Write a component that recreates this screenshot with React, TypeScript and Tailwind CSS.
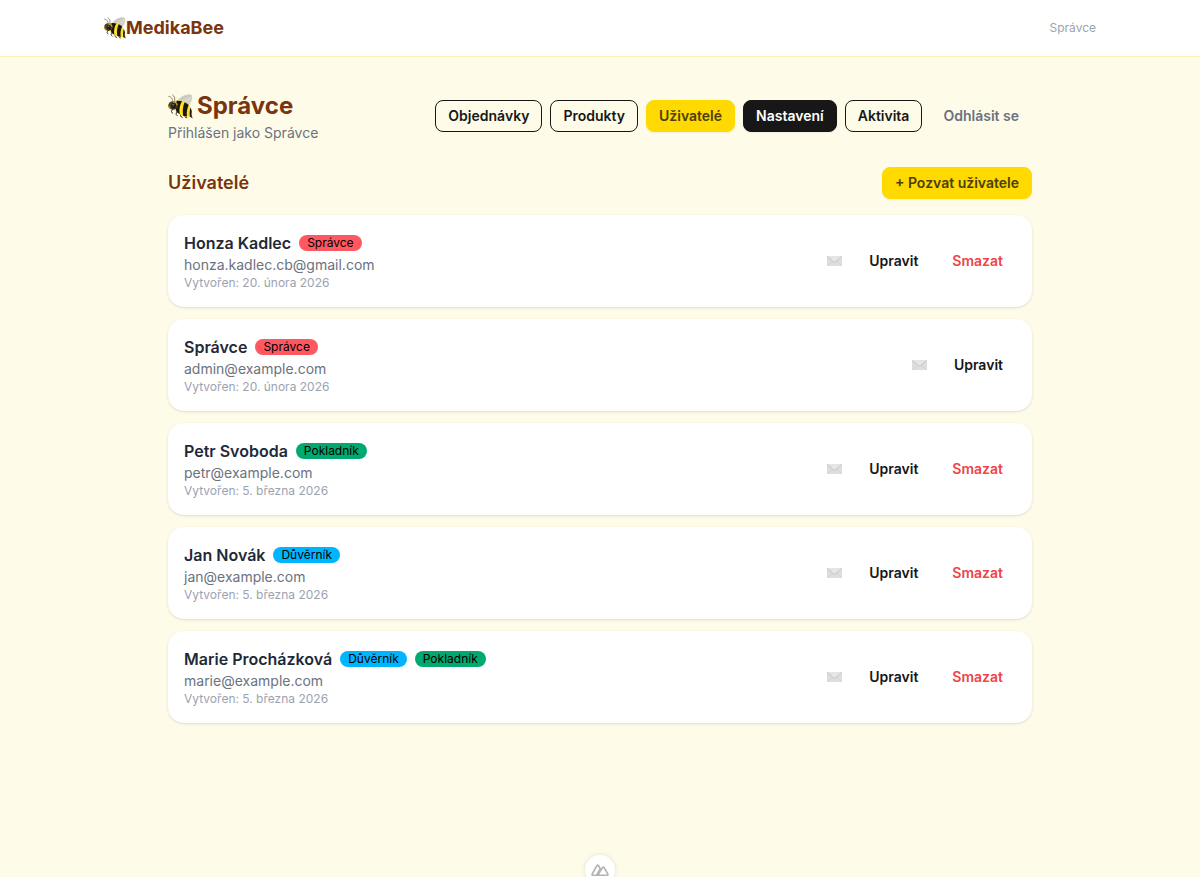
import React from 'react';

type Role = 'admin' | 'cashier' | 'steward';

interface User {
  name: string;
  email: string;
  created: string;
  roles: Role[];
  removable: boolean;
}

const roleLabels: Record<Role, string> = {
  admin: 'Správce',
  cashier: 'Pokladník',
  steward: 'Důvěrník',
};

const roleColors: Record<Role, string> = {
  admin: 'bg-[#ff5861]',
  cashier: 'bg-[#00a96e]',
  steward: 'bg-[#00b5ff]',
};

const users: User[] = [
  { name: 'Honza Kadlec', email: 'honza.kadlec.cb@gmail.com', created: '20. února 2026', roles: ['admin'], removable: true },
  { name: 'Správce', email: 'admin@example.com', created: '20. února 2026', roles: ['admin'], removable: false },
  { name: 'Petr Svoboda', email: 'petr@example.com', created: '5. března 2026', roles: ['cashier'], removable: true },
  { name: 'Jan Novák', email: 'jan@example.com', created: '5. března 2026', roles: ['steward'], removable: true },
  { name: 'Marie Procházková', email: 'marie@example.com', created: '5. března 2026', roles: ['steward', 'cashier'], removable: true },
];

const btn = 'inline-flex h-8 items-center justify-center rounded-lg border px-3 text-sm font-semibold whitespace-nowrap';
const btnOutline = `${btn} border-[#171717] text-[#171717]`;
const btnPrimary = `${btn} border-[#ffd900] bg-[#ffd900] text-[#4b400c] shadow-xs`;
const btnNeutral = `${btn} border-[#171717] bg-[#171717] text-white shadow-xs`;
const btnGhost = `${btn} border-transparent`;

const navItems = [
  { label: 'Objednávky', style: btnOutline },
  { label: 'Produkty', style: btnOutline },
  { label: 'Uživatelé', style: btnPrimary },
  { label: 'Nastavení', style: btnNeutral },
  { label: 'Aktivita', style: btnOutline },
];

const Bee: React.FC<{ className: string }> = ({ className }) => (
  <svg className={className} viewBox="0 0 25 25" fill="none" aria-hidden="true">
    {/* wings */}
    <path d="M9 7.500C11 3.200 17 .1 21.500.3c3.200.3 3.300 3.400 2 6.500-.9 2.200-1.900 4.200-3.500 5.200C16 10.600 12.500 9.200 9 7.500z" fill="#d3d0c5" />
    <path d="M11.500 7.500C14 4.200 18 1.700 22.300 1.600" stroke="#bcb9ac" strokeWidth=".7" />
    <path d="M14 8.500c3.500-1.100 6.500-3 8.800-5" stroke="#e6e3d8" strokeWidth=".8" />
    {/* antennae */}
    <path d="M4.500 8.500C4.900 5.300 3.900 2.900.8 2.400M6.500 8C7.400 5.200 6.700 2.200 4.600.8" stroke="#6b644f" strokeWidth=".8" strokeLinecap="round" />
    {/* legs */}
    <path d="M5 15 3.400 17.200l1 2M8.500 18l-.4 2.400 1.300 1.400M12.500 20.300l.3 2.200 1.500.7M16.500 21.500l1 2 1.300.3" stroke="#3a3222" strokeWidth="1" strokeLinecap="round" strokeLinejoin="round" />
    {/* body */}
    <path d="M6.500 7.200c5.200-1.700 11.300.1 14.600 4.100 2.500 3 3.100 7 3.200 11.100-3.600.7-7.600.3-10.800-1.200C9.800 19.600 7 17.200 5.500 14z" fill="#ffde2e" />
    <path d="M8.600 6.800c2-.2 3.900 0 5.500.5-2.300 3.500-3.200 7.800-2.400 13-1.300-.8-2.400-1.700-3.400-2.800-.9-4-.7-7.700.3-10.700zM16.600 8.200c1.600.7 3 1.600 4.100 2.700-1.700 3.400-2.300 7.200-1.700 11.500-1.400-.1-2.700-.3-3.900-.7-.7-5.300-.2-9.800 1.500-13.500zM22.500 13.600c.7 1.300 1.100 2.700 1.300 4.200-.4 1.300-.5 2.800-.4 4.700l-1.600.1c-.3-3.400-.1-6.400.7-9z" fill="#1b170f" />
    <path d="M23.100 20.500c.8 1 1.200 2.100 1.400 3.900l-2.700-1.800z" fill="#3a3222" />
    {/* head */}
    <ellipse cx="4.900" cy="11.500" rx="4.700" ry="4.300" fill="#54421b" />
    <path d="M4.500 7.300c3-.5 5.200 1.200 5.300 4.300-2-.1-4.200-1.600-5.300-4.300z" fill="#c99a22" />
    <ellipse cx="5.800" cy="11.800" rx="2.500" ry="3" fill="#1b2028" />
    <circle cx="5.200" cy="10.600" r=".9" fill="#6c7684" />
    <path d="M.8 11.800c.2 1.900 1.100 3.100 2.800 3.700" stroke="#d6a52a" strokeWidth=".9" />
  </svg>
);

const Envelope = () => (
  <svg className="h-2.5 w-[15px]" viewBox="0 0 15 10" fill="none" aria-hidden="true">
    <rect width="15" height="10" rx=".5" fill="#dedede" />
    <path d="M.5 9.500 5.700 5M14.500 9.500 9.300 5" stroke="#cdcdcd" strokeWidth=".7" />
    <path d="M.2.300 6.600 5.800c.6.500 1.200.5 1.800 0L14.800.300z" fill="#e6e6e6" />
    <path d="M.2.400 6.600 5.900c.6.500 1.200.5 1.800 0L14.800.400" stroke="#bdbdbd" strokeWidth=".8" />
  </svg>
);

const UserCard: React.FC<{ user: User }> = ({ user }) => (
  <li className="flex items-center justify-between gap-4 rounded-2xl bg-white p-4 shadow-sm">
    <div>
      <div className="flex flex-wrap items-center gap-2">
        <h3 className="text-base font-semibold text-gray-800">{user.name}</h3>
        {user.roles.map((role) => (
          <span key={role} className={`rounded-full px-2 text-xs text-black ${roleColors[role]}`}>
            {roleLabels[role]}
          </span>
        ))}
      </div>
      <p className="text-sm text-[#6b7280]">{user.email}</p>
      <p className="text-xs text-[#9ca3af]">Vytvořen: {user.created}</p>
    </div>
    <div className="flex items-center gap-2">
      <button type="button" aria-label="Poslat e-mail" className="inline-flex h-6 items-center rounded-lg px-1.5">
        <Envelope />
      </button>
      <button type="button" className={`${btnGhost} text-[#171717]`}>Upravit</button>
      {user.removable && (
        <button type="button" className={`${btnGhost} text-[#ef4444]`}>Smazat</button>
      )}
    </div>
  </li>
);

const App: React.FC = () => {
  return (
    <div className="min-h-screen bg-[#fefce8] font-[Inter,'Liberation_Sans',sans-serif]">
      <header className="border-b border-[#fff1b8] bg-white">
        <div className="mx-auto flex h-14 max-w-5xl items-center justify-between px-4">
          <a href="#" className="flex items-center text-lg font-bold text-[#78350f]">
            <Bee className="size-[22px]" />
            MedikaBee
          </a>
          <span className="text-xs text-[#9ca3af]">Správce</span>
        </div>
      </header>

      <main className="mx-auto max-w-4xl px-4 py-8">
        <div className="mb-6 flex flex-wrap items-center justify-between gap-4">
          <div>
            <h1 className="flex items-center gap-1 text-2xl/[34px] font-bold text-[#78350f]">
              <Bee className="size-[25px]" />
              Správce
            </h1>
            <p className="text-sm text-[#6b7280]">Přihlášen jako Správce</p>
          </div>
          <nav className="flex flex-wrap gap-2">
            {navItems.map((item) => (
              <a key={item.label} href="#" className={item.style}>{item.label}</a>
            ))}
            <button type="button" className={`${btnGhost} text-[#6b7280]`}>Odhlásit se</button>
          </nav>
        </div>

        <div className="mb-4 flex items-center justify-between">
          <h2 className="text-lg font-semibold text-[#78350f]">Uživatelé</h2>
          <button type="button" className={btnPrimary}>+ Pozvat uživatele</button>
        </div>

        <ul className="flex flex-col gap-3">
          {users.map((user) => (
            <UserCard key={user.email} user={user} />
          ))}
        </ul>
      </main>

      {/* Devtools toggle, half hidden under the bottom edge */}
      <button
        type="button"
        aria-label="Nuxt DevTools"
        className="fixed -bottom-2 left-1/2 flex size-[30px] -translate-x-1/2 items-center justify-center rounded-full bg-white shadow-[0_0_5px_rgba(0,0,0,0.12)]"
      >
        <svg className="w-[18px]" viewBox="0 0 20 14" fill="none" stroke="#b4b4b4" strokeWidth="1.900" strokeLinejoin="round" aria-hidden="true">
          <path d="M10 12.500H2.200c-.8 0-1.200-.8-.8-1.500L6.600 1.800c.4-.7 1.300-.7 1.700 0l2 3.400L6.300 12.500" />
          <path d="M7.500 12.500h10.300c.8 0 1.200-.8.8-1.500l-4.100-7c-.4-.7-1.300-.7-1.700 0z" />
        </svg>
      </button>
    </div>
  );
};

export default App;
